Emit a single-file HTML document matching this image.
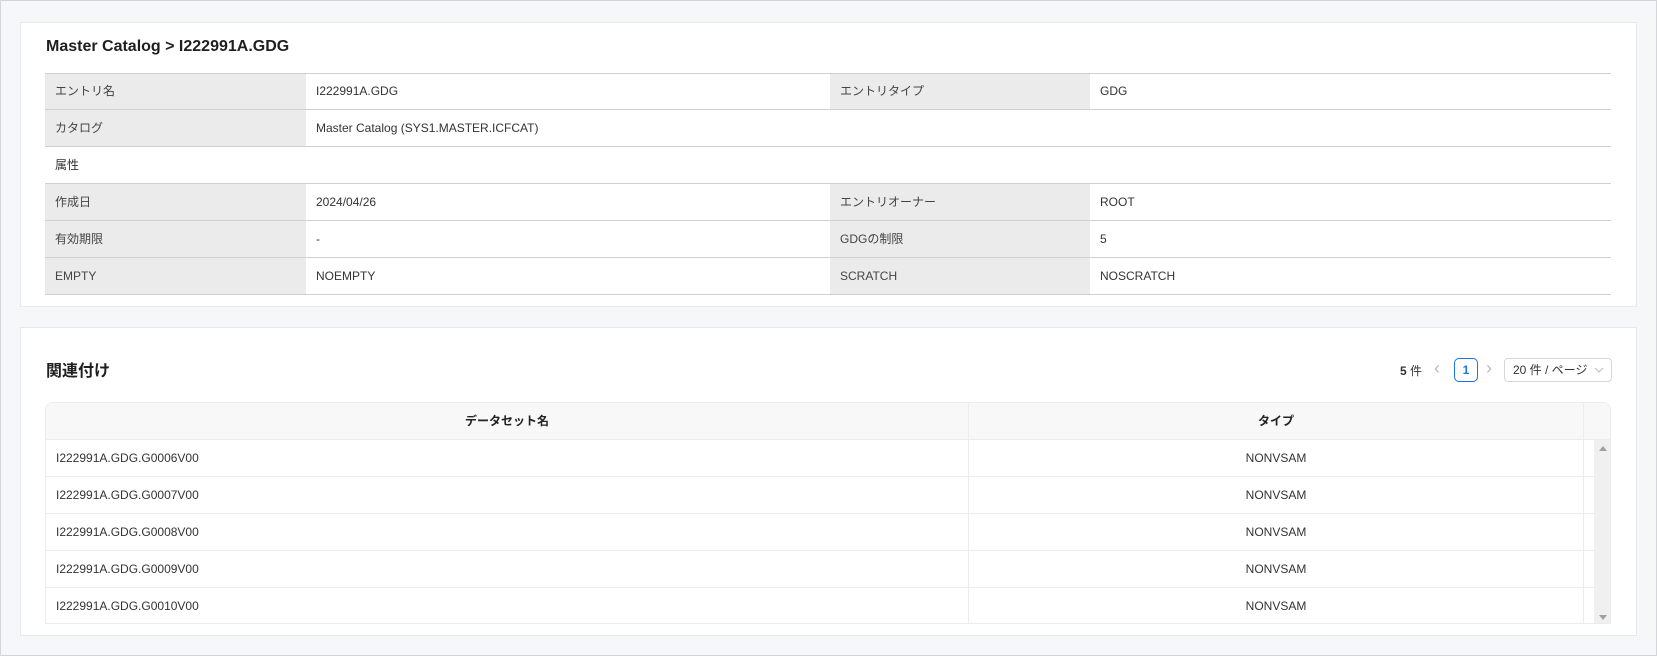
<!DOCTYPE html>
<html><head><meta charset="utf-8"><style>
*{box-sizing:border-box;margin:0;padding:0}
body{width:1657px;height:656px;background:#f6f7f9;font-family:"Liberation Sans","Noto Sans CJK JP",sans-serif;font-size:12px;color:#333;position:relative;overflow:hidden}
.outer{position:absolute;left:0;top:0;width:1657px;height:656px;border:1px solid #d4d6da}
.card{position:absolute;left:20px;width:1617px;background:#fff;border:1px solid #e8e9ec}
.t{position:absolute;font-weight:bold;color:#1f1f1f}
.row{position:absolute;left:45px;width:1566px;height:37px;border-bottom:1px solid #d0d0d0}
.c{position:absolute;top:0;height:36px;line-height:36px;padding-left:10px;white-space:nowrap}
.lab{background:#ebebeb;color:#444}
.dt{position:absolute;left:45px;top:402px;width:1566px;height:222px;border:1px solid #ececec;border-radius:8px 8px 0 0;overflow:hidden}
.dr{position:absolute;left:0;width:1549px;height:37px;border-bottom:1px solid #ececec}
.dr div{position:absolute;top:0;height:36px;line-height:36px}
</style></head><body>
<div class="outer"></div>
<div class="card" style="top:22px;height:285px"></div>
<div class="t" style="left:46px;top:38px;font-size:16px">Master Catalog &gt; I222991A.GDG</div>
<div style="position:absolute;left:45px;top:73px;width:1566px;height:1px;background:#d0d0d0"></div>
<div class="row" style="top:74px;height:36px"><div class="c lab" style="left:0;width:261px;height:35px;line-height:35px">エントリ名</div><div class="c" style="left:261px;line-height:35px">I222991A.GDG</div><div class="c lab" style="left:785px;width:260px;height:35px;line-height:35px">エントリタイプ</div><div class="c" style="left:1045px;line-height:35px">GDG</div></div>
<div class="row" style="top:110px"><div class="c lab" style="left:0;width:261px">カタログ</div><div class="c" style="left:261px">Master Catalog (SYS1.MASTER.ICFCAT)</div></div>
<div class="row" style="top:147px"><div class="c" style="left:0">属性</div></div>
<div class="row" style="top:184px"><div class="c lab" style="left:0;width:261px">作成日</div><div class="c" style="left:261px">2024/04/26</div><div class="c lab" style="left:785px;width:260px">エントリオーナー</div><div class="c" style="left:1045px">ROOT</div></div>
<div class="row" style="top:221px"><div class="c lab" style="left:0;width:261px">有効期限</div><div class="c" style="left:261px">-</div><div class="c lab" style="left:785px;width:260px">GDGの制限</div><div class="c" style="left:1045px">5</div></div>
<div class="row" style="top:258px"><div class="c lab" style="left:0;width:261px">EMPTY</div><div class="c" style="left:261px">NOEMPTY</div><div class="c lab" style="left:785px;width:260px">SCRATCH</div><div class="c" style="left:1045px">NOSCRATCH</div></div>

<div class="card" style="top:327px;height:309px"></div>
<div class="t" style="left:46px;top:357px;font-size:16px">関連付け</div>
<div style="position:absolute;left:1400px;top:362px;"><b>5</b> 件</div>
<div style="position:absolute;left:1434px;top:358px;color:#bbb;font-size:18px">‹</div>
<div style="position:absolute;left:1454px;top:358px;width:24px;height:24px;border:1px solid #1a73e8;border-radius:5px;color:#1a73e8;text-align:center;line-height:22px;font-weight:bold">1</div>
<div style="position:absolute;left:1486px;top:358px;color:#bbb;font-size:18px">›</div>
<div style="position:absolute;left:1504px;top:358px;width:108px;height:24px;border:1px solid #d6d6d6;border-radius:4px;line-height:22px;padding-left:8px;white-space:nowrap">20 件 / ページ</div>
<svg style="position:absolute;left:1594px;top:366px" width="10" height="8"><path d="M1 2 L5 6 L9 2" stroke="#bbb" fill="none"/></svg>
<div class="dt">
<div style="position:absolute;left:0;top:0;width:1566px;height:37px;background:#f8f8f8;border-bottom:1px solid #ececec"></div>
<div style="position:absolute;left:922px;top:0;width:1px;height:222px;background:#ececec"></div>
<div style="position:absolute;left:1537px;top:0;width:1px;height:222px;background:#ececec"></div>
<div style="position:absolute;left:0;top:0;width:922px;height:36px;line-height:36px;text-align:center;font-weight:bold;color:#222">データセット名</div>
<div style="position:absolute;left:923px;top:0;width:614px;height:36px;line-height:36px;text-align:center;font-weight:bold;color:#222">タイプ</div>
<div style="position:absolute;left:1548px;top:37px;width:18px;height:185px;background:#f0f0f0"></div>
<div style="position:absolute;left:1553px;top:43px;border:4px solid transparent;border-bottom:5px solid #a0a0a0;border-top:0"></div>
<div style="position:absolute;left:1553px;top:212px;border:4px solid transparent;border-top:5px solid #a0a0a0;border-bottom:0"></div>
<div class="dr" style="top:37px"><div style="left:10px">I222991A.GDG.G0006V00</div><div style="left:923px;width:614px;text-align:center">NONVSAM</div></div>
<div class="dr" style="top:74px"><div style="left:10px">I222991A.GDG.G0007V00</div><div style="left:923px;width:614px;text-align:center">NONVSAM</div></div>
<div class="dr" style="top:111px"><div style="left:10px">I222991A.GDG.G0008V00</div><div style="left:923px;width:614px;text-align:center">NONVSAM</div></div>
<div class="dr" style="top:148px"><div style="left:10px">I222991A.GDG.G0009V00</div><div style="left:923px;width:614px;text-align:center">NONVSAM</div></div>
<div class="dr" style="top:185px"><div style="left:10px">I222991A.GDG.G0010V00</div><div style="left:923px;width:614px;text-align:center">NONVSAM</div></div>
</div>
</body></html>
